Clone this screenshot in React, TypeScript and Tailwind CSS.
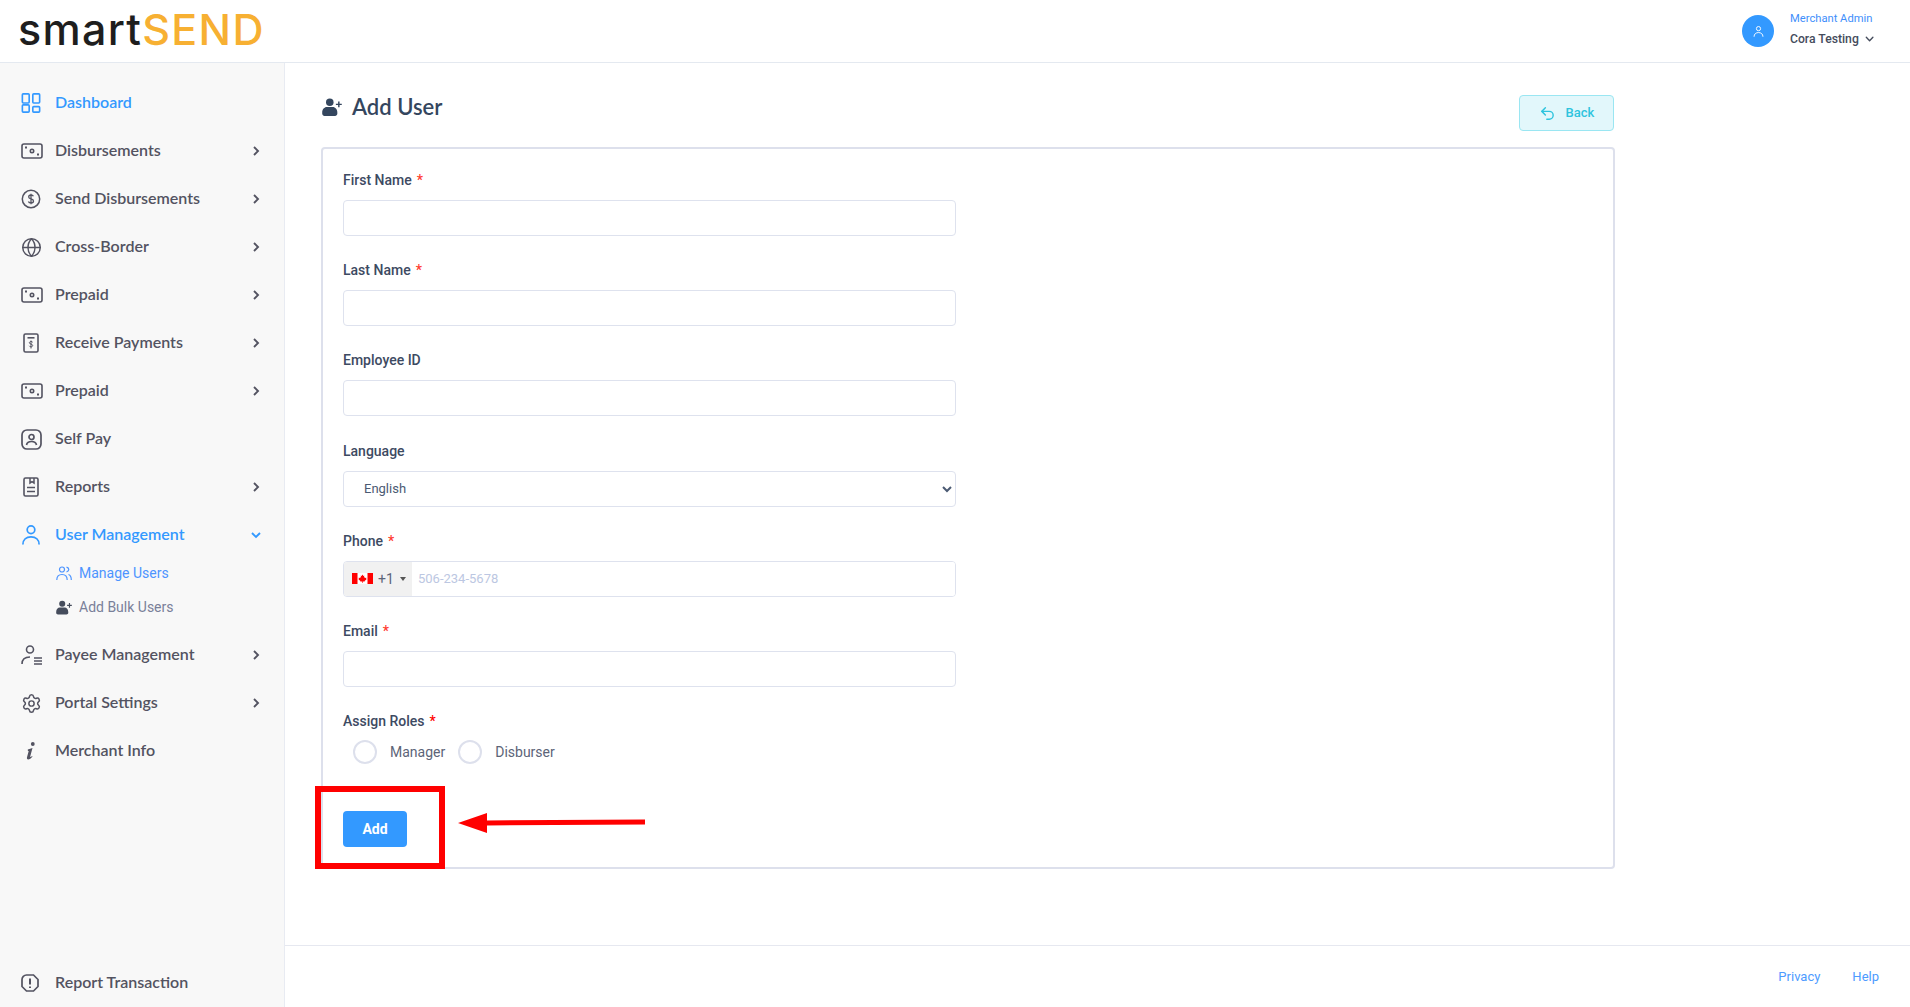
import React from "react";
import { ChevronDown, Globe, Settings, Undo2 } from "lucide-react";

const navFont = "font-['Lato','Open_Sans',sans-serif]";

type IconProps = { className?: string };

const DashIcon = ({ className }: IconProps) => (
  <svg viewBox="0 0 22 22" fill="none" stroke="currentColor" strokeWidth="1.8" className={className}>
    <rect x="1.5" y="1" width="7.5" height="10" rx="1" />
    <rect x="13" y="1" width="7.5" height="10" rx="1" />
    <rect x="1.5" y="13" width="7.5" height="8" rx="1" />
    <rect x="13" y="15" width="7.5" height="6" rx="1" />
  </svg>
);

const MoneyIcon = ({ className }: IconProps) => (
  <svg viewBox="0 0 22 16" fill="none" stroke="currentColor" strokeWidth="1.6" className={className}>
    <rect x="1" y="1" width="20" height="14" rx="2" />
    <circle cx="11" cy="8" r="1.7" />
    <path d="M4 4.5h2M16 11.5h2" strokeWidth="1.8" />
  </svg>
);

const DollarIcon = ({ className }: IconProps) => (
  <svg viewBox="0 0 20 20" fill="none" stroke="currentColor" strokeWidth="1.5" className={className}>
    <circle cx="10" cy="10" r="8.7" />
    <path d="M12.4 7.3c-.4-.9-1.3-1.3-2.4-1.3-1.3 0-2.3.7-2.3 1.900 0 2.500 4.800 1.300 4.800 4 0 1.200-1.100 2-2.500 2-1.200 0-2.200-.5-2.600-1.500M10 4.800v10.400" strokeWidth="1.300" />
  </svg>
);

const ReceiptIcon = ({ className }: IconProps) => (
  <svg viewBox="0 0 16 20" fill="none" stroke="currentColor" strokeWidth="1.6" className={className}>
    <rect x="1" y="1" width="14" height="18" rx="1.500" />
    <path d="M4.500 4.800h7" />
    <path d="M9.700 9.300c-.3-.6-.9-.8-1.700-.8-.9 0-1.600.5-1.600 1.300 0 1.700 3.300.9 3.300 2.700 0 .8-.7 1.300-1.700 1.300-.8 0-1.500-.3-1.800-1M8 7.500v8" strokeWidth="1" />
  </svg>
);

const SelfPayIcon = ({ className }: IconProps) => (
  <svg viewBox="0 0 21 21" fill="none" stroke="currentColor" strokeWidth="1.700" className={className}>
    <rect x="1" y="1" width="19" height="19" rx="5" />
    <circle cx="10.500" cy="8" r="2.500" />
    <path d="M5.500 16c.5-2.500 2.500-3.500 5-3.500s4.500 1 5 3.500" />
  </svg>
);

const ReportIcon = ({ className }: IconProps) => (
  <svg viewBox="0 0 16 20" fill="none" stroke="currentColor" strokeWidth="1.600" className={className}>
    <rect x="1" y="1" width="14" height="18" rx="1.500" />
    <path d="M7 1v5l2-1.300L11 6V1M4 10.500h8M4 14.500h8" strokeWidth="1.500" />
  </svg>
);

const UserIcon = ({ className }: IconProps) => (
  <svg viewBox="0 0 20 21" fill="none" stroke="currentColor" strokeWidth="1.800" className={className}>
    <circle cx="10" cy="5" r="4" />
    <path d="M1.500 20.500c0-5 3.500-8 8.500-8s8.500 3 8.500 8" />
  </svg>
);

const UsersIcon = ({ className }: IconProps) => (
  <svg viewBox="0 0 16 15" fill="none" stroke="currentColor" strokeWidth="1.200" className={className}>
    <circle cx="6" cy="3.500" r="2.500" />
    <path d="M.8 14c0-3.500 2-5.500 5.200-5.500s5.200 2 5.200 5.500M10.500 1.200c1.500.3 2.300 1.200 2.300 2.400s-.8 2-2.300 2.400M12.500 8.500c1.800.6 2.800 2.500 2.800 5.500" />
  </svg>
);

const UserPlusIcon = ({ className }: IconProps) => (
  <svg viewBox="0 0 18 16" fill="currentColor" className={className}>
    <circle cx="7" cy="3.700" r="3.400" />
    <path d="M.2 13c0-3 2-5 4-5h5.600c2 0 4 2 4 5v1c0 1-1 2-2 2H2.200c-1 0-2-1-2-2z" />
    <path d="M14.500 3h1.300v2h2v1.300h-2v2h-1.300v-2h-2V5h2z" />
  </svg>
);

const PayeeIcon = ({ className }: IconProps) => (
  <svg viewBox="0 0 22 20" fill="none" stroke="currentColor" strokeWidth="1.600" className={className}>
    <circle cx="9" cy="4.500" r="3.500" />
    <path d="M1 19c0-4 2.500-7 8-7" />
    <path d="M13 13h8M13 16h8M13 19h8" strokeWidth="1.300" />
  </svg>
);

const InfoIcon = ({ className }: IconProps) => (
  <svg viewBox="0 0 10 18" fill="currentColor" className={className}>
    <circle cx="6.800" cy="2" r="1.900" />
    <path d="M1.800 7.500 6.500 6 4.200 14.500c-.1.600.4.700 1.900-.5l.4.500C5 16.500 3.500 17.500 2.200 17.500 1 17.500.7 16.500 1 15.300l1.700-6.400-.8.200z" />
  </svg>
);

const AlertIcon = ({ className }: IconProps) => (
  <svg viewBox="0 0 18 18" fill="none" stroke="currentColor" strokeWidth="1.700" className={className}>
    <path d="M5.500 1h7L17 5.500v7L12.500 17h-7L1 12.500v-7C1 3 3 1 5.500 1z" />
    <path d="M9 4.500v6M9 12.500v1.500" strokeWidth="2" />
  </svg>
);

const Chevron = ({ open }: { open: boolean }) => (
  <svg viewBox="0 0 10 10" fill="none" stroke="currentColor" strokeWidth="1.900" className="h-[10px] w-[10px]">
    <path d={open ? "M1 3l4 4 4-4" : "M3 1l4 4-4 4"} />
  </svg>
);

const CanadaFlag = () => (
  <svg viewBox="0 0 21 11" className="h-[11px] w-[21px]">
    <rect width="21" height="11" fill="#fff" />
    <rect width="5.500" height="11" fill="#f00" />
    <rect x="15.500" width="5.500" height="11" fill="#f00" />
    <path d="M10.500 1.500 11.300 3l1-.4-.4 2.300 1-.8.400.8 1.200-.2-.4 1.300.5.300-2 1.600.2.700-2-.2v1.500h-.6V8.400l-2 .2.200-.7-2-1.600.5-.3-.4-1.300 1.200.2.400-.8 1 .8-.4-2.300 1 .4z" fill="#f00" />
  </svg>
);

type NavEntry = { label: string; icon: React.ReactNode; arrow?: boolean };

const NavItem = ({ label, icon, arrow = true, active = false, open = false }: NavEntry & { active?: boolean; open?: boolean }) => (
  <div className={`flex h-12 items-center pl-[21px] pr-[23px] ${active ? "text-[#3399ff]" : "text-[#535361]"}`}>
    <div className="flex w-[34px] shrink-0 items-center">{icon}</div>
    <span className={`flex-1 pb-[2px] text-[16px] font-semibold ${navFont}`}>{label}</span>
    {arrow && <Chevron open={open} />}
  </div>
);

const Field = ({ label, required = false, children }: { label: string; required?: boolean; children: React.ReactNode }) => (
  <div className="mb-[24.2px] w-[613px]">
    <label className="mb-[10px] block h-5 text-sm leading-5 font-medium text-[#3d4a62]">
      {label}
      {required && <span className="ml-[5px] text-[#ff3b30]">*</span>}
    </label>
    {children}
  </div>
);

const TextInput = () => (
  <input type="text" className="block h-9 w-full rounded border border-[#dee2ee] bg-white px-3 text-[13px] outline-none" />
);

const Radio = ({ label }: { label: string }) => (
  <div className="flex items-center">
    <span className="h-6 w-6 rounded-full border-2 border-[#dde0ec] bg-white" />
    <span className="ml-[13px] text-sm text-[#5c6478]">{label}</span>
  </div>
);

export default function App() {
  return (
    <div className="relative flex h-screen flex-col overflow-hidden bg-white font-['Roboto',sans-serif]">
      <header className="flex h-[63px] shrink-0 items-center justify-between border-b border-[#e4e9f0] bg-white pl-[18px] pr-[34px]">
        <div className="pb-[4px] text-[43px] leading-none font-medium tracking-[1.3px] font-['Inter',sans-serif]">
          <span className="text-[#1e1e1e]">smart</span>
          <span className="text-[#f7b032]">SEND</span>
        </div>
        <div className="flex items-center">
          <div className="flex h-8 w-8 items-center justify-center rounded-full bg-[#3399ff] text-white">
            <UserIcon className="h-[11px] w-[11px]" />
          </div>
          <div className="ml-4 w-[86px] whitespace-nowrap pb-[4px]">
            <div className="text-[11.2px] leading-4 text-[#3f8ffb]">Merchant Admin</div>
            <div className="mt-[4px] flex items-center text-[12.2px] leading-4 font-medium text-[#454c5c]">
              Cora Testing
              <ChevronDown className="ml-[4px] h-[14px] w-[14px]" strokeWidth={2.5} />
            </div>
          </div>
        </div>
      </header>

      <div className="flex min-h-0 flex-1">
        <aside className="flex w-[285px] shrink-0 flex-col justify-between border-r border-[#e8ebf2] bg-[#f8f8f8]">
          <nav className="pt-4">
            <NavItem label="Dashboard" icon={<DashIcon className="h-5 w-5" />} arrow={false} active />
            <NavItem label="Disbursements" icon={<MoneyIcon className="h-[16px] w-[22px]" />} />
            <NavItem label="Send Disbursements" icon={<DollarIcon className="h-5 w-5" />} />
            <NavItem label="Cross-Border" icon={<Globe className="h-[21px] w-[21px]" strokeWidth={1.7} />} />
            <NavItem label="Prepaid" icon={<MoneyIcon className="h-[16px] w-[22px]" />} />
            <NavItem label="Receive Payments" icon={<ReceiptIcon className="ml-[2px] h-5 w-4" />} />
            <NavItem label="Prepaid" icon={<MoneyIcon className="h-[16px] w-[22px]" />} />
            <NavItem label="Self Pay" icon={<SelfPayIcon className="h-[21px] w-[21px]" />} arrow={false} />
            <NavItem label="Reports" icon={<ReportIcon className="ml-[2px] h-5 w-4" />} />
            <NavItem label="User Management" icon={<UserIcon className="h-5 w-5" />} active open />
            <div className="-mt-[3px] pb-[7px] pl-[56px]">
              <div className="flex h-[34px] items-center text-sm text-[#4d94ff]">
                <UsersIcon className="mr-[7px] h-[15px] w-[16px]" />
                Manage Users
              </div>
              <div className="flex h-[34px] items-center text-sm text-[#7a8099]">
                <UserPlusIcon className="mr-[7px] h-[15px] w-[16px] text-[#454c5c]" />
                Add Bulk Users
              </div>
            </div>
            <NavItem label="Payee Management" icon={<PayeeIcon className="h-5 w-[22px]" />} />
            <NavItem label="Portal Settings" icon={<Settings className="h-[21px] w-[21px]" strokeWidth={1.7} />} />
            <NavItem label="Merchant Info" icon={<InfoIcon className="ml-[5px] h-[18px] w-[10px]" />} arrow={false} />
          </nav>
          <NavItem label="Report Transaction" icon={<AlertIcon className="h-[18px] w-[18px]" />} arrow={false} />
        </aside>

        <main className="flex min-w-0 flex-1 flex-col">
          <div className="flex-1 pl-[36px]">
            <div className="flex h-[84px] w-[1293px] items-start justify-between pt-[32px]">
              <div className="ml-[1px] flex items-center text-[#34465e]">
                <UserPlusIcon className="h-[18px] w-[20px]" />
                <h1 className={`ml-[10px] text-[22px] leading-6 font-semibold ${navFont}`}>Add User</h1>
              </div>
              <button className="flex h-9 w-[95px] items-center justify-center rounded border border-[#9ae6f2] bg-[#e2f7fb] text-[13px] font-medium text-[#2ec4de]">
                <Undo2 className="mr-[10px] h-[17px] w-[17px]" strokeWidth={2} />
                Back
              </button>
            </div>

            <section className="w-[1294px] rounded border-2 border-[#dde0ec] pt-[21px] pr-[19px] pb-5 pl-[20px]">
              <Field label="First Name" required><TextInput /></Field>
              <Field label="Last Name" required><TextInput /></Field>
              <Field label="Employee ID"><TextInput /></Field>
              <Field label="Language">
                <select className="block h-9 w-full rounded border border-[#dee2ee] bg-white pl-4 pr-1 text-[13px] text-[#4b5a73] outline-none">
                  <option>English</option>
                </select>
              </Field>
              <Field label="Phone" required>
                <div className="flex h-9 w-full overflow-hidden rounded border border-[#dee2ee]">
                  <div className="flex w-[68px] shrink-0 items-center bg-[#f1f1f1] pl-2 text-sm text-[#5c6478]">
                    <CanadaFlag />
                    <span className="ml-[5px]">+1</span>
                    <span className="ml-[6px] h-0 w-0 border-x-[3px] border-t-[4px] border-x-transparent border-t-[#555555]" />
                  </div>
                  <input type="text" placeholder="506-234-5678" className="min-w-0 flex-1 bg-white px-[6px] text-[13px] outline-none placeholder:text-[#bcc7e2]" />
                </div>
              </Field>
              <Field label="Email" required><TextInput /></Field>
              <div className="w-[613px]">
                <label className="block h-5 text-sm leading-5 font-medium text-[#3d4a62]">
                  Assign Roles<span className="ml-[5px] text-[#ff0000]">*</span>
                </label>
                <div className="mt-[9px] flex items-center gap-[13px] pl-[10px]">
                  <Radio label="Manager" />
                  <Radio label="Disburser" />
                </div>
              </div>
              <button className="mt-[46.6px] block h-9 w-16 rounded bg-[#3399ff] text-sm font-bold text-white">Add</button>
            </section>
          </div>

          <footer className="flex h-[62px] shrink-0 items-center justify-end gap-[32px] border-t border-[#e6e8f0] pr-[31px] text-[13px] text-[#4d9bff]">
            <span>Privacy</span>
            <span>Help</span>
          </footer>
        </main>
      </div>

      {/* red markup drawn over the screenshot */}
      <div className="absolute top-[786px] left-[315px] h-[83px] w-[130px] border-[6px] border-[#ff0000]" />
      <svg className="absolute top-[810px] left-[456px] h-[26px] w-[192px]" viewBox="0 0 192 26">
        <path d="M2 13 31 3v7.500L189 9.500v5L31 15.500V23z" fill="#ff0000" />
      </svg>
    </div>
  );
}
